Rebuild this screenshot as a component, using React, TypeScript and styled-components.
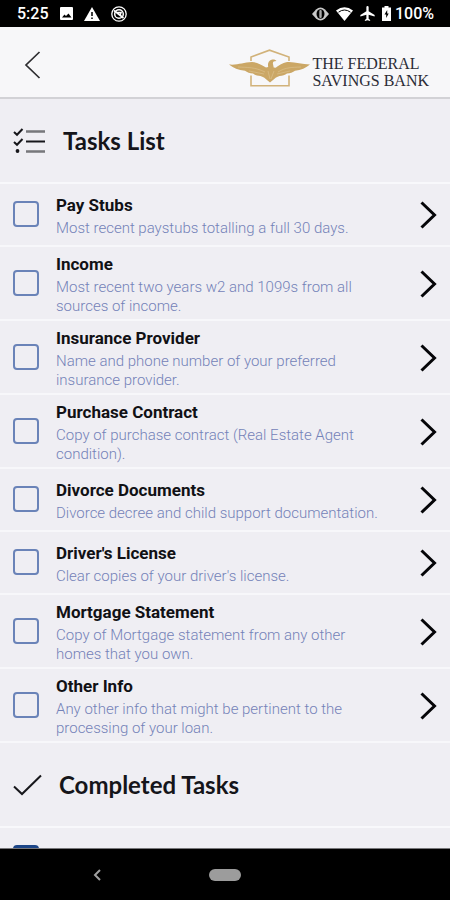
import React, { useState } from 'react';
import styled, { createGlobalStyle } from 'styled-components';

const GlobalStyle = createGlobalStyle`
  * { box-sizing: border-box; }
  body { margin: 0; background: #000; font-family: Roboto, "Liberation Sans", sans-serif; }
  button { border: 0; padding: 0; background: none; cursor: pointer; }
`;

const Screen = styled.div`
  display: flex;
  flex-direction: column;
  height: 100vh;
  background: #efeef3;
`;

const StatusBar = styled.div`
  display: flex;
  flex: none;
  align-items: center;
  justify-content: space-between;
  height: 27px;
  padding: 0 16px 0 17px;
  background: #000;
  color: #fff;
  font-size: 16px;
  font-weight: 500;
`;

const StatusGroup = styled.div<{ $gap: number }>`
  display: flex;
  align-items: center;
  gap: ${(p) => p.$gap}px;
`;

const BatteryLabel = styled.div`
  display: flex;
  align-items: center;
  gap: 4px;
`;

const Header = styled.header`
  display: flex;
  flex: none;
  align-items: center;
  justify-content: space-between;
  height: 72px;
  padding: 6px 21px 0 24px;
  background: #f7f7f9;
  border-bottom: 2px solid #d2d2d6;
`;

const IconButton = styled.button`
  display: flex;
  flex: none;
`;

const Brand = styled.div`
  display: flex;
  align-items: center;
  gap: 2px;
  padding-top: 6px;
  color: #2b2c36;
  font: 16px/17px "Liberation Serif", serif;
`;

const BrandName = styled.div`
  display: flex;
  flex-direction: column;
  padding-top: 8px;
  white-space: nowrap;
`;

const Content = styled.main`
  flex: 1;
  min-height: 0;
  overflow: hidden;
`;

const SectionHeader = styled.div<{ $gap: number }>`
  display: flex;
  align-items: center;
  gap: ${(p) => p.$gap}px;
  height: 85px;
  padding-left: 13px;
  border-bottom: 2px solid #f8f8fb;
`;

const SectionTitle = styled.h2`
  margin: 0;
  color: #15151a;
  font: 700 24px/28px Lato, sans-serif;
`;

const TaskList = styled.ul`
  margin: 0;
  padding: 0;
  list-style: none;
`;

const TaskRow = styled.li`
  display: flex;
  align-items: center;
  min-height: 63px;
  padding: 4px 13px 3px;
  border-bottom: 2px solid #f7f7fa;
`;

const TaskCheck = styled.input`
  appearance: none;
  flex: none;
  width: 26px;
  height: 26px;
  margin: 0 17px 2px 0;
  border: 2px solid #6a83b8;
  border-radius: 4px;
  cursor: pointer;

  &:checked {
    border-color: #1c4587;
    background: #1c4587;
  }
`;

const TaskLabel = styled.label`
  flex: 1;
  margin-right: 26px;
  padding-top: 2px;
  cursor: pointer;
`;

const TaskName = styled.span`
  display: block;
  margin-bottom: 3px;
  color: #111115;
  font-size: 17px;
  font-weight: 700;
  line-height: 22px;
`;

const TaskDetail = styled.span`
  display: block;
  color: #7482b8;
  font-size: 15px;
  font-weight: 300;
  line-height: 19px;
`;

const NavBar = styled.nav`
  display: grid;
  flex: none;
  grid-template-columns: 1fr auto 1fr;
  align-items: center;
  height: 52px;
  background: #000;
  border-top: 1px solid #77777a;
`;

const NavBack = styled(IconButton)`
  justify-self: center;
  margin-right: 16px;
`;

const HomePill = styled.button`
  width: 32px;
  height: 12px;
  border-radius: 6px;
  background: #9c9c9c;
`;

const PhotoIcon = () => (
  <svg width="13" height="13" viewBox="0 0 13 13">
    <rect width="13" height="13" rx="1" fill="#fff" />
    <path d="M2 10.500 4.500 7.500 6 9l2.500-2.500L11.500 10.500Z" fill="#000" />
  </svg>
);

const WarningIcon = () => (
  <svg width="16" height="14" viewBox="0 0 16 14">
    <path d="M8 0 16 14H0Z" fill="#fff" />
    <path d="M8 5v4M8 10.500v1.500" stroke="#000" strokeWidth="1.500" />
  </svg>
);

const SyncOffIcon = () => (
  <svg width="16" height="16" viewBox="0 0 16 16" fill="none" stroke="#fff">
    <circle cx="8" cy="8" r="7.200" strokeWidth="1.300" />
    <circle cx="8" cy="8" r="4.300" strokeWidth="1.500" />
    <path d="M3 4.500 12.500 12M6 6.500h4l-1 3" strokeWidth="1.600" />
  </svg>
);

const VibrateIcon = () => (
  <svg width="17" height="14" viewBox="0 0 17 14">
    <path d="M0 7 4 2.500Q8.500-1.500 13 2.500L17 7l-4 4.500Q8.500 15.500 4 11.500Z" fill="#c9c9c9" />
    <ellipse cx="8.500" cy="7" rx="4" ry="4.800" fill="#000" />
    <rect x="7.300" y="3" width="2.400" height="8" rx="1" fill="#aaa" />
  </svg>
);

const WifiIcon = () => (
  <svg width="17" height="14" viewBox="0 0 17 14">
    <path d="M0 3.500Q8.500-3 17 3.500L8.500 14Z" fill="#fff" />
    <path d="M2.500 5.200Q8.500.800 14.500 5.200" fill="none" stroke="#000" strokeWidth="1" />
  </svg>
);

const PlaneIcon = () => (
  <svg width="15" height="15" viewBox="2 2 19 20">
    <path d="M21 16v-2l-8-5V3.500a1.500 1.500 0 0 0-3 0V9l-8 5v2l8-2.500V19l-2 1.500V22l3.500-1 3.500 1v-1.500L13 19v-5.500Z" fill="#fff" />
  </svg>
);

const BatteryIcon = () => (
  <svg width="9" height="15" viewBox="0 0 9 15">
    <path d="M2.500 0h4v1.500H9V15H0V1.500h2.500Z" fill="#fff" />
    <path d="M5.200 4 2.500 8.500h1.700V12L6.700 7.500H5.200Z" fill="#000" />
  </svg>
);

const BackIcon = () => (
  <svg width="17" height="28" viewBox="0 0 17 28" fill="none" stroke="#2d2d30" strokeWidth="1.700">
    <path d="M15.500 1 2 14 15.500 27" />
  </svg>
);

const EagleLogo = () => (
  <svg width="81" height="38" viewBox="0 0 81 38">
    <path
      d="M22 12V8L40.500 1.200 60 8v4M22 26.500v10.200H60V26.500"
      fill="none"
      stroke="#d1b27a"
      strokeWidth="1.600"
    />
    <path
      d="M0 15.500c9 .8 14-2.200 23-2.500 5 0 9 2.500 14 5.500l2.200-.5c-.8-3 .3-6.500 3.300-7.300 2-.5 3.500-.2 5 1.300-3 0-4 1.200-3.500 3l.7 3.500 2 .2c4.500-3 8-5.700 13.300-5.700 7 .2 13 2.300 21 2.500-4 3.500-9 5.500-15 6.300-2 1.700-5 2.400-8 2.700-2 1.600-4.500 2.300-7.500 2.500l-3.500 1.500-6 5-6-5-3.500-1.500c-3-.2-5.500-.9-7.500-2.500-3-.3-6-1-8-2.700C9.500 21 4 19 0 15.500Z"
      fill="#cba766"
    />
    <path
      d="M9 18c9 .5 17 0 27 5M20 22l15 3M72 18c-9 .5-15 0-23 5M61 22l-13 3M39 22l2 8M45 22l-3 8"
      fill="none"
      stroke="#ddc594"
      strokeWidth=".6"
    />
  </svg>
);

const ChecklistIcon = () => (
  <svg width="32" height="26" viewBox="0 0 32 26" fill="none" stroke="#17171b">
    <path d="M1 4 4 6.800 9.500 1M1 14l3 2.800L9.500 11" strokeWidth="2" />
    <circle cx="4.500" cy="23" r="1.900" fill="#17171b" stroke="none" />
    <path d="M13 13.500h19" strokeWidth="2" />
    <path d="M13 3.500h19M13 23.500h19" stroke="#77777b" strokeWidth="2.400" />
  </svg>
);

const DoneIcon = () => (
  <svg width="29" height="22" viewBox="0 0 29 22" fill="none" stroke="#17171b" strokeWidth="2">
    <path d="M1 12.500 9 20 28 1.500" />
  </svg>
);

const ChevronIcon = () => (
  <svg width="17" height="28" viewBox="0 0 17 28" fill="none" stroke="#050508" strokeWidth="3">
    <path d="M1.500 1.500 14.500 14 1.500 26.500" />
  </svg>
);

const NavBackIcon = () => (
  <svg width="8" height="12" viewBox="0 0 8 12" fill="none" stroke="#a0a0a0" strokeWidth="2">
    <path d="M7 1 2 6l5 5" />
  </svg>
);

type Task = { id: string; name: string; detail: string };

const tasks: Task[] = [
  { id: 'pay-stubs', name: 'Pay Stubs', detail: 'Most recent paystubs totalling a full 30 days.' },
  { id: 'income', name: 'Income', detail: 'Most recent two years w2 and 1099s from all sources of income.' },
  { id: 'insurance', name: 'Insurance Provider', detail: 'Name and phone number of your preferred insurance provider.' },
  { id: 'contract', name: 'Purchase Contract', detail: 'Copy of purchase contract (Real Estate Agent condition).' },
  { id: 'divorce', name: 'Divorce Documents', detail: 'Divorce decree and child support documentation.' },
  { id: 'license', name: "Driver's License", detail: "Clear copies of your driver's license." },
  { id: 'mortgage', name: 'Mortgage Statement', detail: 'Copy of Mortgage statement from any other homes that you own.' },
  { id: 'other', name: 'Other Info', detail: 'Any other info that might be pertinent to the processing of your loan.' },
];

export default function App() {
  const [done, setDone] = useState<Record<string, boolean>>({ completed: true });
  const toggle = (id: string) => setDone((d) => ({ ...d, [id]: !d[id] }));

  return (
    <Screen>
      <GlobalStyle />
      <StatusBar>
        <StatusGroup $gap={11}>
          <span>5:25</span>
          <PhotoIcon />
          <WarningIcon />
          <SyncOffIcon />
        </StatusGroup>
        <StatusGroup $gap={7}>
          <VibrateIcon />
          <WifiIcon />
          <PlaneIcon />
          <BatteryLabel>
            <BatteryIcon />
            <span>100%</span>
          </BatteryLabel>
        </StatusGroup>
      </StatusBar>
      <Header>
        <IconButton aria-label="Back">
          <BackIcon />
        </IconButton>
        <Brand>
          <EagleLogo />
          <BrandName>
            <span>THE FEDERAL</span>
            <span>SAVINGS BANK</span>
          </BrandName>
        </Brand>
      </Header>
      <Content>
        <SectionHeader $gap={18}>
          <ChecklistIcon />
          <SectionTitle>Tasks List</SectionTitle>
        </SectionHeader>
        <TaskList>
          {tasks.map((task) => (
            <TaskRow key={task.id}>
              <TaskCheck
                type="checkbox"
                id={task.id}
                checked={!!done[task.id]}
                onChange={() => toggle(task.id)}
              />
              <TaskLabel htmlFor={task.id}>
                <TaskName>{task.name}</TaskName>
                <TaskDetail>{task.detail}</TaskDetail>
              </TaskLabel>
              <IconButton aria-label={`Open ${task.name}`}>
                <ChevronIcon />
              </IconButton>
            </TaskRow>
          ))}
        </TaskList>
        <SectionHeader $gap={17}>
          <DoneIcon />
          <SectionTitle>Completed Tasks</SectionTitle>
        </SectionHeader>
        <TaskList>
          <TaskRow>
            <TaskCheck
              type="checkbox"
              aria-label="Completed task"
              checked={!!done.completed}
              onChange={() => toggle('completed')}
            />
          </TaskRow>
        </TaskList>
      </Content>
      <NavBar>
        <NavBack aria-label="System back">
          <NavBackIcon />
        </NavBack>
        <HomePill aria-label="Home" />
      </NavBar>
    </Screen>
  );
}
